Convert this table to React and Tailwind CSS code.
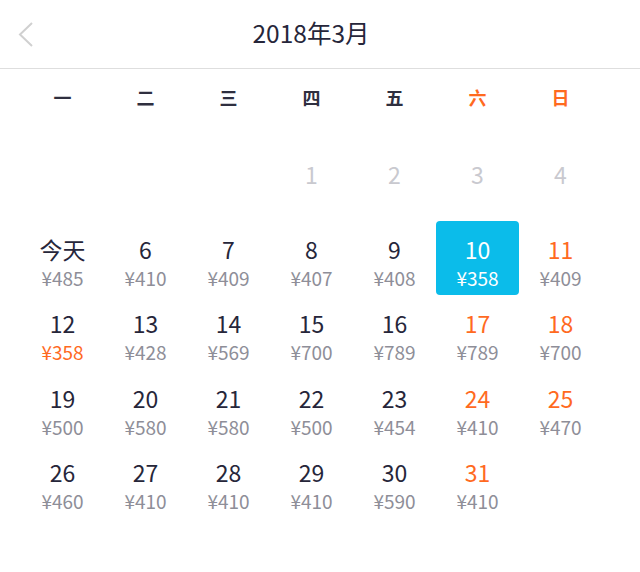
import React from "react";

const ORANGE = "text-[#ff6a1f]";

const rows = [
  [null, null, null, { d: "1", dis: true }, { d: "2", dis: true }, { d: "3", dis: true }, { d: "4", dis: true }],
  [
    { d: "今天", p: "485" },
    { d: "6", p: "410" },
    { d: "7", p: "409" },
    { d: "8", p: "407" },
    { d: "9", p: "408" },
    { d: "10", p: "358", sel: true },
    { d: "11", p: "409", we: true },
  ],
  [
    { d: "12", p: "358", low: true },
    { d: "13", p: "428" },
    { d: "14", p: "569" },
    { d: "15", p: "700" },
    { d: "16", p: "789" },
    { d: "17", p: "789", we: true },
    { d: "18", p: "700", we: true },
  ],
  [
    { d: "19", p: "500" },
    { d: "20", p: "580" },
    { d: "21", p: "580" },
    { d: "22", p: "500" },
    { d: "23", p: "454" },
    { d: "24", p: "410", we: true },
    { d: "25", p: "470", we: true },
  ],
  [
    { d: "26", p: "460" },
    { d: "27", p: "410" },
    { d: "28", p: "410" },
    { d: "29", p: "410" },
    { d: "30", p: "590" },
    { d: "31", p: "410", we: true },
    null,
  ],
];

function Cell({ c }) {
  if (!c) return <div className="h-[74.5px]" />;
  let numCls = "text-[#26263a]";
  if (c.dis) numCls = "text-[#c9c9cf]";
  else if (c.we) numCls = ORANGE;
  if (c.sel) numCls = "text-white";
  let priceCls = c.low ? ORANGE : "text-[#8e8e98]";
  if (c.sel) priceCls = "text-white";
  return (
    <div className="h-[74.5px] flex">
      <div
        className={
          "w-[83px] h-[74px] flex flex-col items-center pt-[14px] rounded-[4px] " +
          (c.sel ? "bg-[#0bbcea]" : "")
        }
      >
        <div className={"text-[23px] leading-[28px] " + numCls}>{c.d}</div>
        {c.p && (
          <div className={"text-[19px] leading-[22px] mt-[4px] " + priceCls}>¥{c.p}</div>
        )}
      </div>
    </div>
  );
}

export default function App() {
  const weekdays = ["一", "二", "三", "四", "五", "六", "日"];
  return (
    <div
      className="w-[640px] h-[572px] bg-white overflow-hidden"
      style={{ fontFamily: '"Noto Sans CJK SC", "Noto Sans", sans-serif' }}
    >
      <div className="relative h-[69px] flex items-center justify-center border-b border-[#dedede]">
        <svg
          className="absolute left-[17px] top-[21px]"
          width="18"
          height="27"
          viewBox="0 0 18 27"
          fill="none"
        >
          <path d="M15 2 L3 13.5 L15 25" stroke="#d0d0d0" strokeWidth="2" />
        </svg>
        <div className="text-[24.5px] leading-[30px] text-[#26263a] mr-[18px] mt-[-2px]">2018年3月</div>
      </div>
      <div className="w-[581px] ml-[21px]">
        <div className="grid grid-cols-7 h-[57px] items-center">
          {weekdays.map((w, i) => (
            <div
              key={w}
              className={
                "text-center text-[18px] font-bold " + (i >= 5 ? ORANGE : "text-[#2f2f3f]")
              }
            >
              {w}
            </div>
          ))}
        </div>
        <div className="mt-[20px] grid grid-cols-7">
          {rows.flat().map((c, i) => (
            <Cell key={i} c={c} />
          ))}
        </div>
      </div>
    </div>
  );
}
